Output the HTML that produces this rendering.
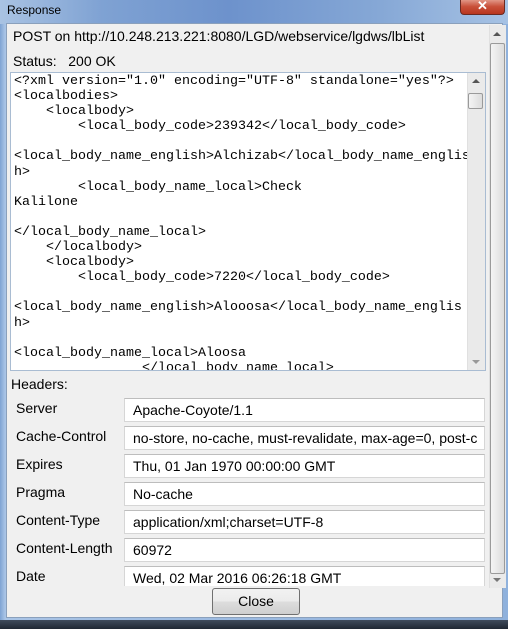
<!DOCTYPE html>
<html><head><meta charset="utf-8"><style>
*{margin:0;padding:0;box-sizing:border-box}
body{width:508px;height:629px;overflow:hidden;background:#6f93c4;font-family:"Liberation Sans",Arial,sans-serif;position:relative}
.title{position:absolute;left:0;top:0;width:508px;height:24px;background:linear-gradient(90deg,#a9c3e3 0%,#7fa2d3 20%,#6d92cc 45%,#86a8d6 75%,#a6c2e4 100%)}
.title span{position:absolute;left:7px;top:3px;font-size:12px;color:#000}
.x{position:absolute;left:460px;top:-1px;width:45px;height:16px;border:1px solid #6b2a22;border-top:none;border-radius:0 0 4px 4px;background:linear-gradient(#e5a192,#c9503a 50%,#b8361f);color:#fff;font-size:13px;font-weight:bold;text-align:center;line-height:14px}
.frame{position:absolute;left:0;top:23px;width:508px;height:597px;background:linear-gradient(90deg,#7ea3d3,#a9c4e6 1%,#8fb1dc)}
.panel{position:absolute;left:6px;top:23px;width:497px;height:595px;background:#f0f0f0;border:1px solid #8aa0bc}
.bot{position:absolute;left:0;top:620px;width:508px;height:9px;background:linear-gradient(#3f4b5c,#1f2733)}
.t{position:absolute;font-size:14px;color:#000;white-space:nowrap}
.ta{position:absolute;left:10px;top:72px;width:476px;height:299px;background:#fff;border:1px solid #a9bcd2;overflow:hidden}
pre{position:absolute;left:3px;top:1px;font-family:"Liberation Mono","Courier New",monospace;font-size:13.33px;line-height:15.1px;color:#000}
.sb{position:absolute;background:#eaeaea;border-left:1px solid #e0e0e0}
.thumb{position:absolute;background:linear-gradient(90deg,#f4f4f4,#dcdcdc);border:1px solid #9a9a9a;border-radius:2px}
.arr{position:absolute;width:0;height:0;border-left:4px solid transparent;border-right:4px solid transparent}
.f{position:absolute;left:124px;width:361px;height:24px;background:#fff;border:1px solid #d6d6d6;border-top-color:#bdbdbd;font-size:14px;line-height:22px;padding-left:8px;white-space:nowrap;overflow:hidden}
.btn{position:absolute;left:212px;top:588px;width:88px;height:27px;border:1px solid #707070;border-radius:3px;background:linear-gradient(#f2f2f2,#ebebeb 50%,#dddddd 51%,#cfcfcf);font-size:14px;text-align:center;line-height:25px}
</style></head><body>
<div class="frame"></div>
<div class="title"><span>Response</span><div class="x">✕</div></div>
<div class="panel"></div>
<div style="position:absolute;left:7px;top:24px;width:482px;height:562px;overflow:hidden">
<div class="t" style="left:6px;top:4px">POST on http://10.248.213.221:8080/LGD/webservice/lgdws/lbList</div>
<div class="t" style="left:6px;top:29px">Status:&nbsp;&nbsp; 200 OK</div>
</div>
<div class="ta"><pre>&lt;?xml version="1.0" encoding="UTF-8" standalone="yes"?&gt;
&lt;localbodies&gt;
    &lt;localbody&gt;
        &lt;local_body_code&gt;239342&lt;/local_body_code&gt;

&lt;local_body_name_english&gt;Alchizab&lt;/local_body_name_englis
h&gt;
        &lt;local_body_name_local&gt;Check
Kalilone

&lt;/local_body_name_local&gt;
    &lt;/localbody&gt;
    &lt;localbody&gt;
        &lt;local_body_code&gt;7220&lt;/local_body_code&gt;

&lt;local_body_name_english&gt;Alooosa&lt;/local_body_name_englis
h&gt;

&lt;local_body_name_local&gt;Aloosa
                &lt;/local_body_name_local&gt;</pre>
<div class="sb" style="left:456px;top:0;width:18px;height:297px"></div>
<div class="arr" style="left:461px;top:6px;border-bottom:4px solid #555"></div>
<div class="thumb" style="left:457px;top:20px;width:15px;height:16px"></div>
<div class="arr" style="left:461px;top:287px;border-top:4px solid #999"></div>
</div>
<div class="t" style="left:11px;top:376px">Headers:</div>
<div style="position:absolute;left:0;top:0;width:490px;height:586px;overflow:hidden">
<div class="t" style="left:16px;top:400px">Server</div><div class="f" style="top:398px">Apache-Coyote/1.1</div>
<div class="t" style="left:16px;top:428px">Cache-Control</div><div class="f" style="top:426px">no-store, no-cache, must-revalidate, max-age=0, post-c</div>
<div class="t" style="left:16px;top:456px">Expires</div><div class="f" style="top:454px">Thu, 01 Jan 1970 00:00:00 GMT</div>
<div class="t" style="left:16px;top:484px">Pragma</div><div class="f" style="top:482px">No-cache</div>
<div class="t" style="left:16px;top:512px">Content-Type</div><div class="f" style="top:510px">application/xml;charset=UTF-8</div>
<div class="t" style="left:16px;top:540px">Content-Length</div><div class="f" style="top:538px">60972</div>
<div class="t" style="left:16px;top:568px">Date</div><div class="f" style="top:566px">Wed, 02 Mar 2016 06:26:18 GMT</div>
</div>
<div class="sb" style="left:489px;top:25px;width:17px;height:563px"></div>
<div class="arr" style="left:493px;top:32px;border-bottom:4px solid #555"></div>
<div class="thumb" style="left:490px;top:43px;width:15px;height:531px"></div>
<div class="arr" style="left:493px;top:578px;border-top:4px solid #777"></div>
<div class="btn">Close</div>
<div class="bot"></div>
</body></html>
